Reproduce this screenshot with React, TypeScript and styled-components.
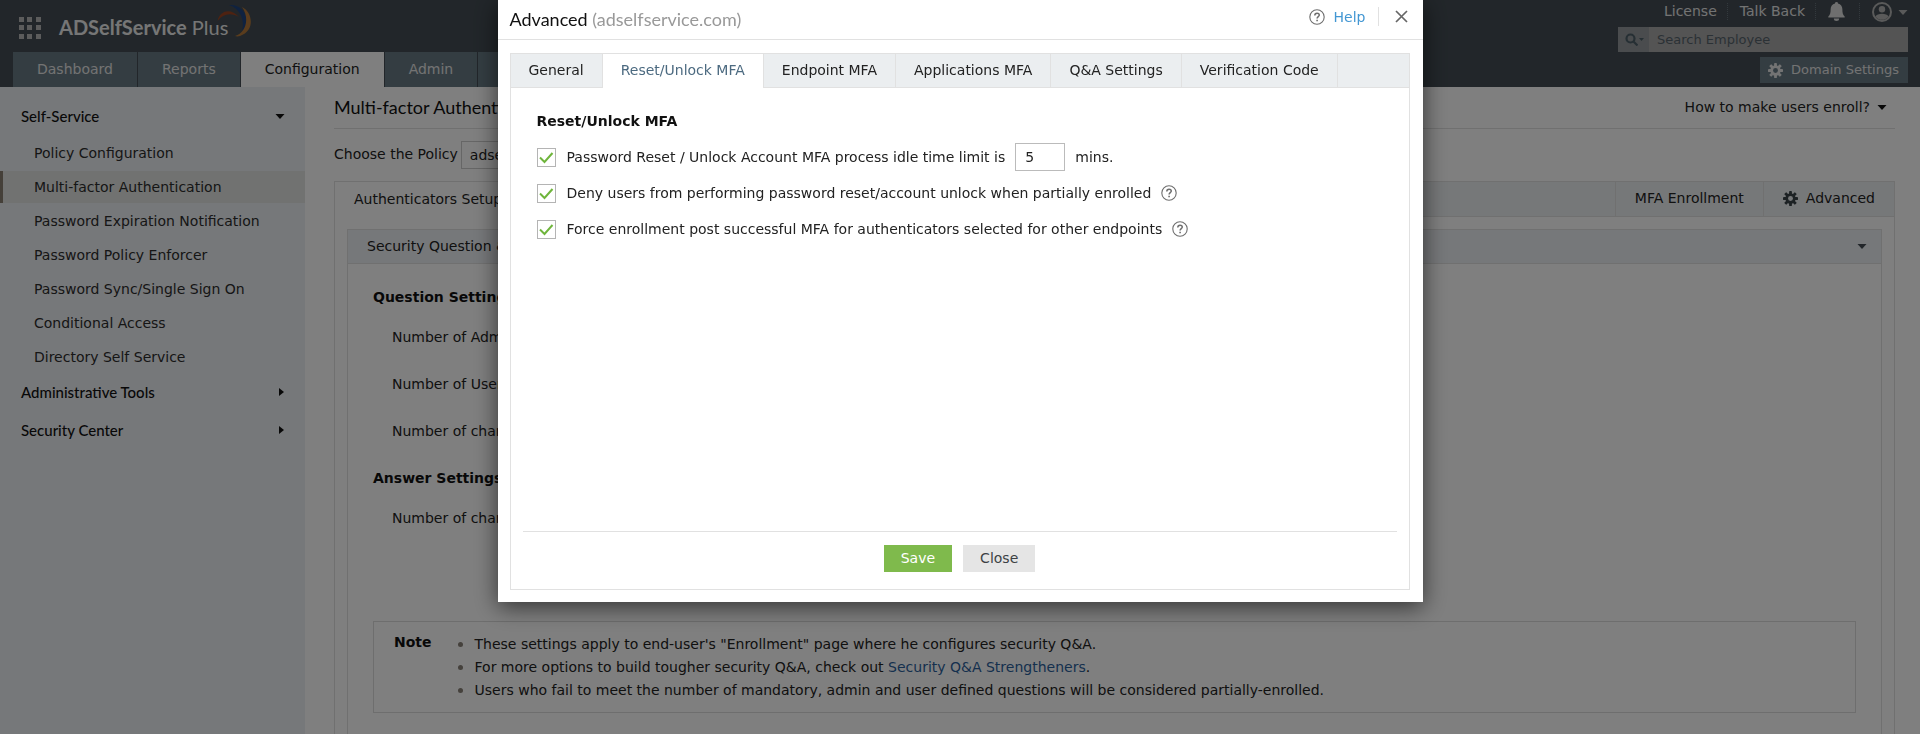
import React from "react";
import styled, { createGlobalStyle, css } from "styled-components";

const sans = `"DejaVu Sans", Verdana, sans-serif`;
const lato = `Lato, sans-serif`;
const line = "#e1e1e1";
const ink = "#222222";

const Global = createGlobalStyle`
  *, *::before, *::after { box-sizing: border-box; }
  html, body { margin: 0; height: 100%; overflow: hidden; }
  body { background: #ffffff; color: ${ink}; font: 14px/20px ${sans}; }
  #root { height: 100%; }
  button, input, select { font: inherit; color: inherit; margin: 0; }
  button { border: 0; background: none; padding: 0; cursor: pointer; }
  a { text-decoration: none; color: inherit; }
  h1, h2, h3, ul, p { margin: 0; padding: 0; }
  ul { list-style: none; }
  svg { display: block; flex: none; }
`;

/* ---------- page frame ---------- */
const Page = styled.div`
  display: flex;
  flex-direction: column;
  height: 100%;
`;

const Header = styled.header`
  display: flex;
  justify-content: space-between;
  height: 87px;
  flex: none;
  padding: 0 12px 0 13px;
  background: #444d54;
  color: #ffffff;
`;

const BrandSide = styled.div`
  display: flex;
  flex-direction: column;
  justify-content: space-between;
`;

const Brand = styled.div`
  display: flex;
  align-items: center;
  height: 52px;
  padding: 4px 0 0 6px;
`;

const BrandName = styled.a`
  margin-left: 18px;
  padding-bottom: 2px;
  font: 400 20px/24px ${lato};
  color: #ededed;
  b { font-weight: 700; }
`;

const LogoSwoosh = styled.svg`
  margin: 0 0 14px -11px;
`;

const Nav = styled.nav`
  display: flex;
  height: 35px;
`;

const NavTab = styled.button<{ $active?: boolean }>`
  height: 35px;
  min-width: 20px;
  padding: 0 24px 2px;
  border-right: 1px solid #444d54;
  background: ${p => (p.$active ? "#ffffff" : "#687b85")};
  color: ${p => (p.$active ? ink : "#e6e6e6")};
`;

const ToolsSide = styled.div`
  display: flex;
  flex-direction: column;
  align-items: flex-end;
`;

const UserLinks = styled.div`
  display: flex;
  align-items: center;
  height: 27px;
  padding-bottom: 4px;
  color: #e6e6e6;
  a { padding: 0 10px 0 12px; border-right: 1px dotted #66727a; line-height: 17px; }
`;

const IconLink = styled.button<{ $ruled?: boolean }>`
  display: flex;
  align-items: center;
  gap: 6px;
  height: 17px;
  padding: 0 ${p => (p.$ruled ? 14 : 0)}px 0 12px;
  border-right: ${p => (p.$ruled ? "1px dotted #66727a" : "0")};
`;

const Search = styled.label`
  display: flex;
  width: 290px;
  height: 25px;
  margin-bottom: 5px;
  background: #a8a8a8;
  color: #596870;
`;

const SearchScope = styled.span`
  display: flex;
  align-items: center;
  gap: 1px;
  width: 31px;
  padding-left: 7px;
  background: #94999c;
`;

const SearchInput = styled.input`
  flex: 1;
  min-width: 0;
  border: 0;
  padding: 0 8px;
  background: transparent;
  font-size: 13px;
  &::placeholder { color: #56636b; opacity: 1; }
`;

const DomainButton = styled.button`
  display: flex;
  align-items: center;
  gap: 8px;
  height: 26px;
  padding: 0 9px 0 8px;
  background: #687b85;
  color: #e6e6e6;
  font-size: 13px;
`;

const Body = styled.div`
  display: flex;
  flex: 1;
  min-height: 0;
`;

/* ---------- sidebar ---------- */
const Sidebar = styled.nav`
  width: 305px;
  flex: none;
  padding-top: 10px;
  background: #edf0f4;
`;

const Group = styled.button`
  display: flex;
  justify-content: space-between;
  align-items: center;
  width: 100%;
  height: 38px;
  padding: 0 20px 0 21px;
  font: 500 15px/20px ${lato};
  color: #111111;
  text-align: left;
`;

const SideList = styled.ul`
  display: flex;
  flex-direction: column;
  gap: 2px;
  padding-top: 2px;
`;

const SideLink = styled.a<{ $active?: boolean }>`
  display: flex;
  align-items: center;
  height: 32px;
  padding-left: 31px;
  border-left: 3px solid transparent;
  color: #2d2d2d;
  ${p => p.$active && css`background: #e2e5e3; border-left-color: #8a8172;`}
`;

/* ---------- main content ---------- */
const Main = styled.main`
  display: flex;
  flex-direction: column;
  flex: 1;
  min-width: 0;
  padding: 0 25px 0 29px;
`;

const TitleBar = styled.div`
  display: flex;
  flex: none;
  justify-content: space-between;
  align-items: center;
  height: 42px;
  padding-bottom: 1px;
  border-bottom: 1px solid ${line};
`;

const PageTitle = styled.h1`
  font: 400 18px/22px ${lato};
  color: #111111;
`;

const HowTo = styled.button`
  display: flex;
  align-items: center;
  gap: 7px;
  padding-right: 8px;
`;

const PolicyRow = styled.div`
  display: flex;
  flex: none;
  align-items: center;
  gap: 3px;
  height: 52px;
  label { padding-bottom: 2px; }
`;

const PolicySelect = styled.select`
  appearance: none;
  width: 180px;
  height: 28px;
  padding: 0 8px;
  border: 1px solid #cccccc;
  border-radius: 0;
  background: #ffffff;
`;

const Panel = styled.section`
  display: flex;
  flex-direction: column;
  flex: 1 0 auto;
  border: 1px solid ${line};
  border-bottom: 0;
`;

const PanelTabs = styled.div`
  display: flex;
  height: 35px;
  margin-bottom: 12px;
  background: #edf0f2;
  border-bottom: 1px solid ${line};
`;

const PanelTab = styled.button<{ $active?: boolean }>`
  display: flex;
  align-items: center;
  gap: 8px;
  height: ${p => (p.$active ? 35 : 34)}px;
  padding: 0 ${p => (p.$active ? 18 : 19)}px 2px;
  border-left: 1px solid ${p => (p.$active ? "transparent" : line)};
  background: ${p => (p.$active ? "#ffffff" : "transparent")};
`;

const Spacer = styled.span`
  flex: 1;
`;

const Section = styled(Panel)`
  margin: 0 12px;
`;

const SectionHead = styled.button`
  display: flex;
  justify-content: space-between;
  align-items: center;
  height: 34px;
  padding: 0 14px 2px 19px;
  background: #edf0f4;
  border-bottom: 1px solid ${line};
`;

const SectionBody = styled.div`
  display: flex;
  flex-direction: column;
  padding: 0 25px;
`;

const SubTitle = styled.h2`
  height: 40px;
  font: 700 14px/20px ${sans};
  color: #111111;
  &:first-child { margin-top: 23px; }
`;

const Setting = styled.p`
  height: 47px;
  padding-left: 19px;
  white-space: nowrap;
`;

const Note = styled.aside`
  display: flex;
  gap: 26px;
  height: 92px;
  margin-top: 66px;
  padding: 10px 20px;
  border: 1px solid #dcdcdc;
  b { color: #111111; }
`;

const NoteList = styled.ul`
  padding-top: 1px;
  line-height: 23px;
  li { display: flex; align-items: center; gap: 12px; }
  li::before { content: ""; width: 5px; height: 5px; border-radius: 50%; background: #8a8279; }
  a { color: #2b619c; }
`;

/* ---------- dialog ---------- */
const Backdrop = styled.div`
  position: fixed;
  inset: 0;
  display: flex;
  justify-content: center;
  align-items: flex-start;
  background: rgba(0, 0, 0, 0.5);
`;

const Dialog = styled.div`
  width: 925px;
  max-width: 100%;
  padding-bottom: 12px;
  background: #ffffff;
  box-shadow: 0 5px 22px rgba(0, 0, 0, 0.6);
`;

const DialogHead = styled.div`
  display: flex;
  align-items: center;
  justify-content: space-between;
  height: 40px;
  margin-bottom: 13px;
  padding: 0 15px 2px 12px;
  border-bottom: 1px solid ${line};
`;

const DialogTitle = styled.h2`
  font: 400 18px/22px ${lato};
  color: #111111;
  span { color: #999999; }
`;

const HeadActions = styled.div`
  display: flex;
  align-items: center;
  padding-bottom: 4px;
  a { display: flex; align-items: center; gap: 9px; padding-right: 12px; color: #4397d3; }
  button { padding-left: 16px; height: 19px; border-left: 1px solid ${line}; }
`;

const DialogPanel = styled.div`
  margin: 0 13px 0 12px;
  border: 1px solid ${line};
`;

const DialogTabs = styled.div`
  display: flex;
  height: 34px;
  background: #ebeef0;
  border-bottom: 1px solid ${line};
`;

const DialogTab = styled.button<{ $active?: boolean }>`
  height: ${p => (p.$active ? 34 : 33)}px;
  padding: 0 18px 2px;
  border-right: 1px solid ${line};
  background: ${p => (p.$active ? "#ffffff" : "transparent")};
  color: ${p => (p.$active ? "#4c6a80" : ink)};
`;

const Form = styled.div`
  display: flex;
  flex-direction: column;
  min-height: 443px;
  padding: 23px 26px 0;
`;

const FormTitle = styled.h3`
  margin-bottom: 8px;
  font: 700 14px/20px ${sans};
  color: #111111;
`;

const Option = styled.div`
  display: flex;
  align-items: center;
  gap: 10px;
  height: 36px;
  label { display: flex; align-items: center; gap: 11px; }
`;

const CheckWrap = styled.span`
  position: relative;
  display: flex;
  svg { position: absolute; inset: 0; pointer-events: none; }
`;

const CheckInput = styled.input`
  appearance: none;
  width: 19px;
  height: 19px;
  border: 1px solid #b4b4b4;
  background: #ffffff;
  & + svg { display: none; }
  &:checked + svg { display: block; }
`;

const MinutesInput = styled.input`
  width: 50px;
  height: 28px;
  padding: 0 9px;
  border: 1px solid #bbbbbb;
`;

const FormFoot = styled.div`
  display: flex;
  justify-content: center;
  gap: 11px;
  height: 58px;
  margin: 0 12px;
  padding-top: 13px;
  border-top: 1px solid ${line};
`;

const FootButton = styled.button<{ $primary?: boolean }>`
  height: 27px;
  padding: 0 17px 2px;
  background: ${p => (p.$primary ? "#7fba4c" : "#e5e5e5")};
  color: ${p => (p.$primary ? "#ffffff" : "#3c4144")};
`;

/* ---------- icons ---------- */
const Caret = ({ dir = "down", color = "#111" }: { dir?: "down" | "right"; color?: string }) => (
  <svg width="10" height="10" viewBox="0 0 10 10" aria-hidden="true">
    <path d={dir === "down" ? "M0.5 3h9L5 8z" : "M4 1v8l5-4z"} fill={color} />
  </svg>
);

const AppsGrid = () => (
  <svg width="22" height="22" viewBox="0 0 22 22" aria-hidden="true">
    {[0, 8, 17].map(y => [0, 8, 17].map(x => <rect key={`${x}-${y}`} x={x} y={y} width="5" height="5" fill="#b9b9b9" />))}
  </svg>
);

const Swoosh = () => (
  <LogoSwoosh width="36" height="34" viewBox="0 0 36 34" aria-hidden="true">
    <path d="M0.500 17C3 6 14 4 22 13C14 8.500 6 9.500 0.500 17z" fill="#9c4522" />
    <path d="M12 1C22 0 30 8 29.500 17C29.300 21 27 25 25 27C28 17 24 5 12 1z" fill="#1f4480" />
    <path d="M25 3C35 8 38 24 26 30.500C23 32.500 20 33 18 32C29 29 33 14 25 3z" fill="#b5793a" />
  </LogoSwoosh>
);

const Gear = ({ color, size = 15 }: { color: string; size?: number }) => (
  <svg width={size} height={size} viewBox="0 0 16 16" aria-hidden="true">
    <mask id="gear-hole" maskUnits="userSpaceOnUse" x="-8" y="-8" width="32" height="32">
      <rect x="-8" y="-8" width="32" height="32" fill="#fff" />
      <circle cx="8" cy="8" r="2.600" fill="#000" />
    </mask>
    <g fill={color} mask="url(#gear-hole)">
      {[0, 45, 90, 135].map(a => <rect key={a} x="6.500" y="0" width="3" height="16" rx="0.500" transform={`rotate(${a} 8 8)`} />)}
      <circle cx="8" cy="8" r="5.500" />
    </g>
  </svg>
);

const Bell = () => (
  <svg width="17" height="19" viewBox="0 0 16 19" preserveAspectRatio="none" aria-hidden="true">
    <path d="M8 0a1.400 1.400 0 0 1 1.400 1.500C12 2.200 13.500 4.500 13.500 7c0 4 .6 6 2.200 7.500V15.500H.3V14.500C1.900 13 2.500 11 2.500 7c0-2.500 1.500-4.800 4.100-5.500A1.400 1.400 0 0 1 8 0zM5.500 16.500h5a2.500 2.500 0 0 1-5 0z" fill="#dedede" />
  </svg>
);

const User = () => (
  <svg width="20" height="20" viewBox="0 0 20 20" aria-hidden="true">
    <circle cx="10" cy="10" r="9" fill="none" stroke="#b4b4b4" strokeWidth="2" />
    <circle cx="10" cy="7.200" r="3.200" fill="#b4b4b4" />
    <path d="M3.500 14.500C5 10.800 15 10.800 16.500 14.500A8 8 0 0 1 3.500 14.500z" fill="#b4b4b4" />
  </svg>
);

const Magnifier = () => (
  <svg width="13" height="13" viewBox="0 0 13 13" fill="none" stroke="#4d5e68" strokeWidth="2.200" aria-hidden="true">
    <circle cx="5.500" cy="5.500" r="4" />
    <path d="M8.500 8.500l4 4" />
  </svg>
);

const HelpIcon = () => (
  <svg width="16" height="16" viewBox="0 0 16 16" fill="none" stroke="#6e6e6e" aria-hidden="true">
    <circle cx="8" cy="8" r="7.200" strokeWidth="1.100" />
    <path d="M5.800 6.400C5.800 3.400 10.300 3.500 10.300 6.100C10.300 7.700 8.100 7.700 8.100 9.500" strokeWidth="1.500" />
    <path d="M8.100 10.700v1.500" strokeWidth="1.600" />
  </svg>
);

const CloseIcon = () => (
  <svg width="13" height="13" viewBox="0 0 13 13" stroke="#666" strokeWidth="1.700" aria-hidden="true">
    <path d="M1 1l11 11M12 1L1 12" />
  </svg>
);

const Check = ({ id }: { id: string }) => (
  <CheckWrap>
    <CheckInput type="checkbox" id={id} defaultChecked />
    <svg width="19" height="19" viewBox="0 0 19 19" fill="none" stroke="#6fb53c" strokeWidth="2" aria-hidden="true">
      <path d="M3 9.500l4.500 4.500L15.500 5" />
    </svg>
  </CheckWrap>
);

/* ---------- data ---------- */
const sideLinks = [
  "Policy Configuration",
  "Multi-factor Authentication",
  "Password Expiration Notification",
  "Password Policy Enforcer",
  "Password Sync/Single Sign On",
  "Conditional Access",
  "Directory Self Service",
];
const navTabs = ["Dashboard", "Reports", "Configuration", "Admin"];
const dialogTabs = ["General", "Reset/Unlock MFA", "Endpoint MFA", "Applications MFA", "Q&A Settings", "Verification Code"];

const App = () => (
  <>
    <Global />
    <Page>
      <Header>
        <BrandSide>
          <Brand>
            <AppsGrid />
            <BrandName href="#"><b>ADSelfService</b> Plus</BrandName>
            <Swoosh />
          </Brand>
          <Nav>
            {navTabs.map(t => <NavTab key={t} $active={t === "Configuration"}>{t}</NavTab>)}
            <NavTab aria-label="More" />
          </Nav>
        </BrandSide>
        <ToolsSide>
          <UserLinks>
            <a href="#">License</a>
            <a href="#">Talk Back</a>
            <IconLink $ruled aria-label="Notifications"><Bell /></IconLink>
            <IconLink aria-label="Account"><User /><Caret color="#b4b4b4" /></IconLink>
          </UserLinks>
          <Search>
            <SearchScope><Magnifier /><svg width="5" height="3" viewBox="0 0 5 3"><path d="M0 0h5L2.500 3z" fill="#4d5e68" /></svg></SearchScope>
            <SearchInput type="text" placeholder="Search Employee" aria-label="Search Employee" />
          </Search>
          <DomainButton><Gear color="#e6e6e6" />Domain Settings</DomainButton>
        </ToolsSide>
      </Header>
      <Body>
        <Sidebar>
          <Group>Self-Service<Caret /></Group>
          <SideList>
            {sideLinks.map((t, i) => <li key={t}><SideLink href="#" $active={i === 1}>{t}</SideLink></li>)}
          </SideList>
          <Group>Administrative Tools<Caret dir="right" /></Group>
          <Group>Security Center<Caret dir="right" /></Group>
        </Sidebar>
        <Main>
          <TitleBar>
            <PageTitle>Multi-factor Authentication</PageTitle>
            <HowTo>How to make users enroll?<Caret /></HowTo>
          </TitleBar>
          <PolicyRow>
            <label htmlFor="policy">Choose the Policy</label>
            <PolicySelect id="policy"><option>adselfservice.com</option></PolicySelect>
          </PolicyRow>
          <Panel>
            <PanelTabs>
              <PanelTab $active>Authenticators Setup</PanelTab>
              <Spacer />
              <PanelTab>MFA Enrollment</PanelTab>
              <PanelTab><Gear color="#3a4449" />Advanced</PanelTab>
            </PanelTabs>
            <Section>
              <SectionHead>Security Question &amp; Answer<Caret color="#444d54" /></SectionHead>
              <SectionBody>
                <SubTitle>Question Settings</SubTitle>
                <Setting>Number of Admin</Setting>
                <Setting>Number of User</Setting>
                <Setting>Number of characters</Setting>
                <SubTitle>Answer Settings</SubTitle>
                <Setting>Number of characters</Setting>
                <Note>
                  <b>Note</b>
                  <NoteList>
                    <li>These settings apply to end-user's "Enrollment" page where he configures security Q&amp;A.</li>
                    <li><span>For more options to build tougher security Q&amp;A, check out <a href="#">Security Q&amp;A Strengtheners</a>.</span></li>
                    <li>Users who fail to meet the number of mandatory, admin and user defined questions will be considered partially-enrolled.</li>
                  </NoteList>
                </Note>
              </SectionBody>
            </Section>
          </Panel>
        </Main>
      </Body>
    </Page>
    <Backdrop>
      <Dialog role="dialog" aria-modal="true" aria-labelledby="dialog-title">
        <DialogHead>
          <DialogTitle id="dialog-title">Advanced <span>(adselfservice.com)</span></DialogTitle>
          <HeadActions>
            <a href="#"><HelpIcon />Help</a>
            <button aria-label="Close dialog"><CloseIcon /></button>
          </HeadActions>
        </DialogHead>
        <DialogPanel>
          <DialogTabs>
            {dialogTabs.map((t, i) => <DialogTab key={t} $active={i === 1}>{t}</DialogTab>)}
          </DialogTabs>
          <Form>
            <FormTitle>Reset/Unlock MFA</FormTitle>
            <Option>
              <label htmlFor="idle"><Check id="idle" />Password Reset / Unlock Account MFA process idle time limit is</label>
              <MinutesInput type="text" defaultValue="5" aria-label="Idle time limit in minutes" />
              <span>mins.</span>
            </Option>
            <Option>
              <label htmlFor="deny"><Check id="deny" />Deny users from performing password reset/account unlock when partially enrolled</label>
              <HelpIcon />
            </Option>
            <Option>
              <label htmlFor="force"><Check id="force" />Force enrollment post successful MFA for authenticators selected for other endpoints</label>
              <HelpIcon />
            </Option>
          </Form>
          <FormFoot>
            <FootButton $primary>Save</FootButton>
            <FootButton>Close</FootButton>
          </FormFoot>
        </DialogPanel>
      </Dialog>
    </Backdrop>
  </>
);

export default App;
